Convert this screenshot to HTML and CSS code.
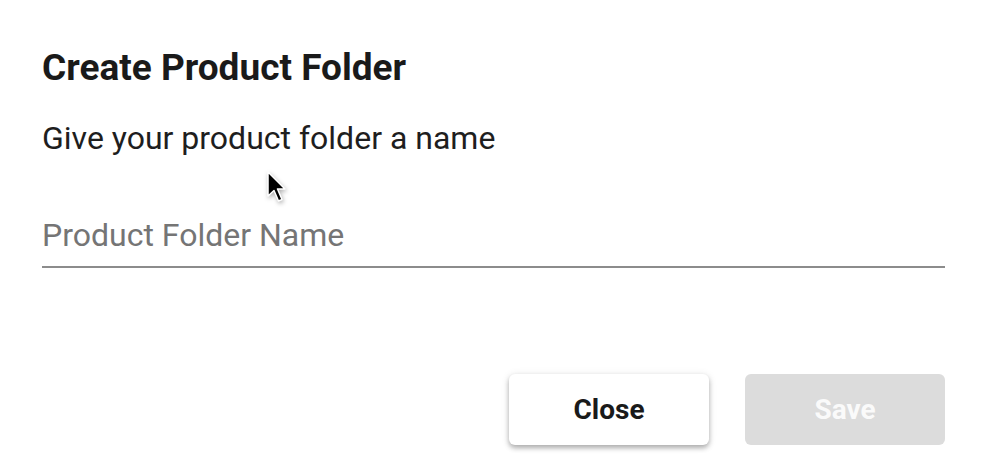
FILE: index.html
```html
<!DOCTYPE html>
<html>
<head>
<meta charset="utf-8">
<link rel="stylesheet" href="styles.css">
</head>
<body>
<div class="dialog">
  <h1 class="title">Create Product Folder</h1>
  <p class="subtitle">Give your product folder a name</p>
  <div class="field">
    <input class="input" type="text" placeholder="Product Folder Name">
  </div>
  <div class="actions">
    <button class="btn btn-close">Close</button>
    <button class="btn btn-save" disabled>Save</button>
  </div>
  <svg class="cursor" width="22" height="34" viewBox="0 0 22 34">
    <path d="M2 1 L2 25 L8 19.5 L12.5 30 L16 28.5 L11.5 18 L19 18 Z" fill="#000" stroke="#fff" stroke-width="1.5" stroke-linejoin="round"/>
  </svg>
</div>
</body>
</html>
```
FILE: styles.css
```css
* { box-sizing: border-box; }
html, body {
  margin: 0;
  padding: 0;
  background: #fff;
  width: 990px;
  height: 468px;
  overflow: hidden;
}
body {
  font-family: Roboto, "Noto Sans", sans-serif;
  color: #1c1c1c;
}
.dialog {
  position: relative;
  padding: 46px 45px 0 42px;
  display: flex;
  flex-direction: column;
}
.title {
  margin: 0;
  font-size: 37px;
  font-weight: 700;
  line-height: 44px;
  color: #1a1a1a;
}
.subtitle {
  margin: 28px 0 0 0;
  font-size: 32px;
  font-weight: 400;
  line-height: 40px;
  color: #1e1e1e;
}
.field {
  margin-top: 54px;
  border-bottom: 2px solid #8c8c8c;
  height: 56px;
}
.input {
  border: 0;
  outline: 0;
  padding: 0;
  margin: 0;
  width: 100%;
  height: 46px;
  font-family: Roboto, "Noto Sans", sans-serif;
  font-size: 32px;
  color: #333;
  background: transparent;
}
.input::placeholder {
  color: #757575;
}
.actions {
  margin-top: 106px;
  padding-left: 1px;
  display: flex;
  justify-content: flex-end;
  gap: 36px;
}
.btn {
  width: 200px;
  height: 71px;
  border: 0;
  border-radius: 6px;
  font-family: Roboto, "Noto Sans", sans-serif;
  font-size: 28px;
  font-weight: 700;
}
.btn-close {
  background: #fff;
  color: #1a1a1a;
  box-shadow: 0 3px 5px rgba(0,0,0,0.28), 0 1px 8px rgba(0,0,0,0.10);
}
.btn-save {
  background: #dcdcdc;
  color: #fafafa;
}
.cursor {
  position: absolute;
  left: 266px;
  top: 171px;
  filter: drop-shadow(1px 2px 2px rgba(0,0,0,0.3));
}
```
